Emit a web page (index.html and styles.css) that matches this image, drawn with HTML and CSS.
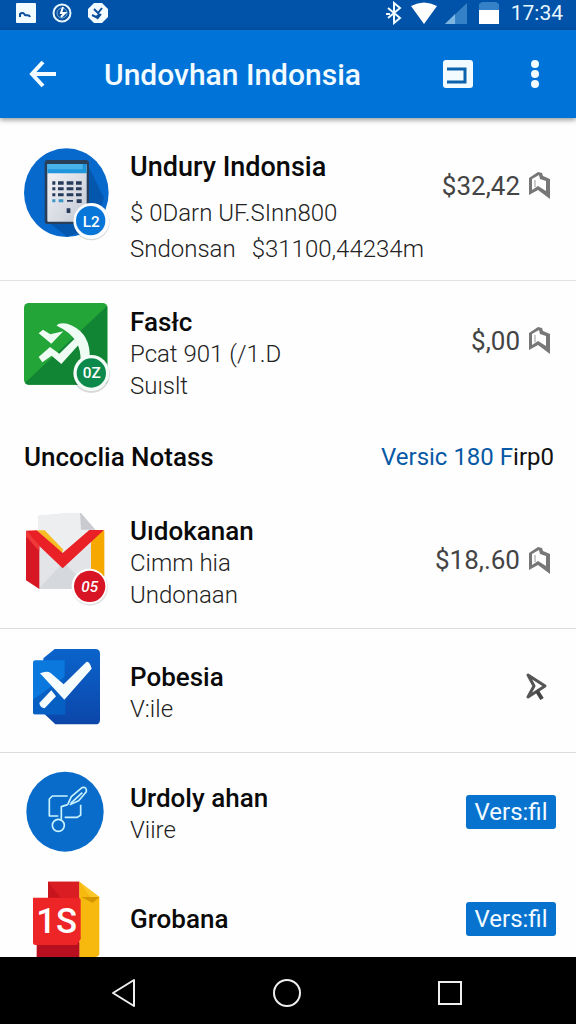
FILE: index.html
```html
<!DOCTYPE html>
<html lang="id">
<head>
    <meta charset="UTF-8">
    <meta name="viewport" content="width=device-width, initial-scale=1.0">
    <title>Undovhan Indonsia</title>
    <link rel="stylesheet" href="styles.css">
</head>
<body>

<!-- shared icon shapes -->
<svg class="defs" aria-hidden="true">
    <symbol id="bookmark" viewBox="0 0 26 30">
        <path d="M2 8 L11 2 L15 3 L16 6 L23 9 V29 L11 20 L2 25 Z M5 9 V20 L11 16 L19 21 V11 L13 9 L12 5 Z" fill="#777" fill-rule="evenodd"/>
        <path d="M8 10 V17" stroke="#999" stroke-width="1"/>
    </symbol>
</svg>

<div class="status-bar">
    <div class="status-left">
        <svg width="20" height="20" viewBox="0 0 20 20">
            <rect width="20" height="20" rx="1" fill="#f2fbff"/>
            <path d="M4 14 V11 C6 9 8 10 9 12 C11 13 13 11 14 14" fill="none" stroke="#0b4f9c" stroke-width="2"/>
        </svg>
        <svg width="20" height="20" viewBox="0 0 20 20">
            <circle cx="10" cy="10" r="8.5" fill="#0b4f9c" stroke="#e6f7ff" stroke-width="2"/>
            <circle cx="10" cy="10" r="5" fill="none" stroke="#6eaee0" stroke-width="1"/>
            <path d="M11 4 L9 10 H13 L9 14" fill="none" stroke="#fff" stroke-width="2"/>
        </svg>
        <svg width="20" height="20" viewBox="0 0 20 20">
            <path d="M6 0 H14 L20 6 V14 L14 20 H6 L0 14 V6 Z" fill="#f2fbff"/>
            <path d="M6 6 L10 10 L14 5 M4 12 L8 14 L12 11 M9 16 L13 11" fill="none" stroke="#0b4f9c" stroke-width="2"/>
        </svg>
    </div>
    <div class="status-right">
        <svg width="18" height="24" viewBox="0 0 18 24">
            <path d="M3 7 L15 17 L9 22 V2 L15 7 L3 17" fill="none" stroke="#f2fbff" stroke-width="2"/>
            <path d="M1 13 H5" stroke="#f2fbff" stroke-width="2"/>
        </svg>
        <svg width="26" height="22" viewBox="0 0 26 22"><path d="M0 4 Q13 -3 26 4 L13 22 Z" fill="#fff"/></svg>
        <svg width="22" height="24" viewBox="0 0 24 24">
            <path d="M0 24 L24 1 V24 Z" fill="#3581c8"/>
            <path d="M0 24 L11 13 V24 Z" fill="#7db5e2"/>
        </svg>
        <svg class="battery" width="20" height="22" viewBox="0 0 20 22">
            <path d="M0 2 L3 0 H17 L20 2 V9 H0 Z" fill="#3581c8"/>
            <path d="M0 8 H20 V22 H0 Z" fill="#fff"/>
        </svg>
        <span class="clock">17:34</span>
    </div>
</div>

<header class="app-bar">
    <button class="icon-btn" aria-label="Back">
        <svg width="30" height="30" viewBox="0 0 30 30">
            <path d="M28 15 H4 M15 3 L4 15 L15 27" fill="none" stroke="#f2fbff" stroke-width="4"/>
        </svg>
    </button>
    <h1>Undovhan Indonsia</h1>
    <button class="icon-btn card-btn" aria-label="Card view">
        <svg width="30" height="28" viewBox="0 0 30 28">
            <rect width="30" height="28" rx="3" fill="#f2fbff"/>
            <path d="M4 9 H22 V22 H4" fill="none" stroke="#0b62ad" stroke-width="3"/>
        </svg>
    </button>
    <button class="icon-btn" aria-label="More options">
        <svg width="10" height="28" viewBox="0 0 10 28" fill="#f2fbff">
            <circle cx="5" cy="4" r="4"/><circle cx="5" cy="14" r="4"/><circle cx="5" cy="24" r="4"/>
        </svg>
    </button>
</header>

<main class="list">
    <div class="row row-top row-first">
        <svg class="app-icon" viewBox="0 0 264 282">
            <defs>
                <linearGradient id="paper" x1="0" y1="0" x2="1" y2="1">
                    <stop offset="0" stop-color="#f4f5f8"/><stop offset="1" stop-color="#c4c9d4"/>
                </linearGradient>
            </defs>
            <ellipse cx="127" cy="134" rx="127" ry="133" fill="#0869cc"/>
            <path d="M64 216 L196 60 L240 150 L206 240 L130 266 Z" fill="#0557ad"/>
            <rect x="62" y="36" width="133" height="192" rx="10" fill="#293e59"/>
            <rect x="70" y="48" width="118" height="173" rx="3" fill="url(#paper)"/>
            <path d="M70 48 H188 V76 H70 Z" fill="#2095dc"/>
            <path d="M70 48 H176 V64 H70 Z" fill="#48b2ea"/>
            <g fill="#273b5b">
                <path d="M85 100h9v10h-9zM102 100h17v10h-17zM128 100h20v10h-20zM156 100h17v10h-17z"/>
                <path d="M85 118h9v9h-9zM102 118h17v9h-17zM128 118h20v9h-20zM156 118h17v9h-17z"/>
                <path d="M85 136h9v9h-9zM102 136h17v9h-17zM128 136h20v9h-20zM156 136h17v9h-17z"/>
                <path d="M158 154h15v11h-15zM129 156h18v5h-18zM128 181h11v14h-11z"/>
            </g>
            <path d="M85 154h9v9h-9zM104 154h14v9h-14z" fill="#3996c8"/>
            <circle cx="202" cy="222" r="55" fill="#000" opacity=".15"/>
            <circle cx="202" cy="219" r="54" fill="#fafcff"/>
            <circle cx="200" cy="218" r="44" fill="#0875d8"/>
            <text x="202" y="236" class="badge-text">L2</text>
        </svg>
        <div class="info">
            <h2>Undury Indonsia</h2>
            <p>$ 0Darn UF.SInn800</p>
            <p class="split"><span>Sndonsan</span><span>$31100,44234m</span></p>
        </div>
        <div class="price">$32,42</div>
        <button class="icon-btn mark" aria-label="Bookmark Undury Indonsia"><svg width="26" height="30"><use href="#bookmark"/></svg></button>
    </div>

    <div class="row row-top">
        <svg class="app-icon" viewBox="0 0 264 282">
            <rect width="250" height="245" rx="14" fill="#24a538"/>
            <path d="M250 8 V231 Q250 245 236 245 H14 Q6 245 3 239 Z" fill="#128535"/>
            <path d="M44 91 L57 80 L79 94 L118 85 L82 122 Z" fill="#eefcf4"/>
            <path d="M44 162 L78 132 L106 152 L151 108 L164 125 L112 183 L83 158 L55 178 Z" fill="#eefcf4"/>
            <path d="M98 68 Q105 58 130 62 Q193 83 197 150 V180 H169 Q177 104 98 68 Z" fill="#eefcf4"/>
            <circle cx="202" cy="214" r="56" fill="#000" opacity=".15"/>
            <circle cx="202" cy="210" r="54" fill="#f3fbf7"/>
            <circle cx="202" cy="210" r="44" fill="#0c8a4c"/>
            <text x="203" y="226" class="badge-text">0Z</text>
        </svg>
        <div class="info">
            <h2>Fasłc</h2>
            <p>Pcat 901 (/1.D</p>
            <p>Suıslt</p>
        </div>
        <div class="price">$,00</div>
        <button class="icon-btn mark" aria-label="Bookmark Fasłc"><svg width="26" height="30"><use href="#bookmark"/></svg></button>
    </div>

    <div class="section-head">
        <h2>Uncoclia Notass</h2>
        <a href="#">Versic 180 F<span>irp0</span></a>
    </div>

    <div class="row row-mail">
        <svg class="app-icon" viewBox="0 0 264 282">
            <path d="M43 8 L168 -3 L214 50 V226 L44 228 Z" fill="#e2e4e7"/>
            <path d="M43 8 L168 -3 L214 50 V80 L120 160 L43 80 Z" fill="#eceef0"/>
            <path d="M168 -3 L214 50 H171 Z" fill="#c9cbd0"/>
            <path d="M44 228 L118 148 L200 228 Z" fill="#d5d8dd"/>
            <path d="M201 70 L241 52 V190 H201 Z" fill="#f6a800"/>
            <path d="M38 52 L62 52 L118 110 L112 124 Z" fill="#f6bd24"/>
            <path d="M6 53 L46 98 V228 L6 202 Z" fill="#d81725"/>
            <path d="M6 53 L38 52 L116 120 L196 51 H240 L116 166 L45 98 Z" fill="#e92127"/>
            <path d="M6 53 L46 98 V115 L6 70 Z" fill="#ef3838"/>
            <circle cx="198" cy="224" r="54" fill="#000" opacity=".1"/>
            <circle cx="196" cy="220" r="53" fill="#fff"/>
            <circle cx="197" cy="220" r="47" fill="#d71524"/>
            <text x="197" y="236" class="badge-text badge-slant">05</text>
        </svg>
        <div class="info">
            <h2>Uıdokanan</h2>
            <p>Cimm hia</p>
            <p>Undonaan</p>
        </div>
        <div class="price">$18,.60</div>
        <button class="icon-btn mark" aria-label="Bookmark Uıdokanan"><svg width="26" height="30"><use href="#bookmark"/></svg></button>
    </div>

    <div class="row row-line">
        <svg class="app-icon icon-small" viewBox="0 0 264 240">
            <defs>
                <linearGradient id="deep" x1="0" y1="0" x2="0" y2="1">
                    <stop offset="0" stop-color="#0a64cb"/><stop offset="1" stop-color="#0c46aa"/>
                </linearGradient>
            </defs>
            <path d="M58 34 L92 6 H214 Q228 6 228 20 V218 Q228 232 214 232 H94 L58 198 Z" fill="url(#deep)"/>
            <path d="M34 40 H122 V202 H34 Q27 202 27 194 V48 Q27 40 34 40 Z" fill="#0a78dc"/>
            <path d="M124 88 V202 H34 Q27 202 27 194 V158 Z" fill="#0660c4"/>
            <path d="M48 79 Q68 70 80 78 L119 112 L187 45 Q196 41 203 65 L121 158 Z" fill="#f6fdff"/>
            <path d="M46 168 L82 130 L96 148 L62 184 Q48 183 46 168 Z" fill="#f6fdff"/>
        </svg>
        <div class="info">
            <h2>Pobesia</h2>
            <p>V:ile</p>
        </div>
        <button class="icon-btn send" aria-label="Send Pobesia">
            <svg width="24" height="30" viewBox="0 0 24 30">
                <path d="M4 3 L21 14 L4 25 L10 14 Z" fill="#fff" stroke="#555" stroke-width="3" stroke-linejoin="round"/>
                <path d="M13 19 L18 27" stroke="#444" stroke-width="4"/>
            </svg>
        </button>
    </div>

    <div class="row row-share">
        <svg class="app-icon icon-medium" viewBox="0 0 264 246">
            <ellipse cx="123" cy="122" rx="116" ry="120" fill="#0a6cca"/>
            <g fill="none" stroke="#c9f2ff" stroke-width="5" stroke-linejoin="round">
                <path d="M131 75 H85 L76 84 V135 H103 M122 139 H160 L170 132 V101"/>
                <path d="M131 101 L142 77 L174 50 Q189 46 187 62 L164 89 L137 101"/>
                <path d="M140 97 L175 65 M131 101 L112 107 V146"/>
                <circle cx="103" cy="163" r="18"/>
            </g>
        </svg>
        <div class="info">
            <h2>Urdoly ahan</h2>
            <p>Viire</p>
        </div>
        <button class="action">Vers:fil</button>
    </div>

    <div class="row">
        <svg class="app-icon icon-small" viewBox="0 0 264 240">
            <path d="M72 8 H166 V240 H72 Z" fill="#c8141d"/>
            <path d="M72 8 H166 V56 H110 Z" fill="#da1c23"/>
            <path d="M166 8 L226 54 V222 Q226 234 214 234 H166 Z" fill="#f7b90e"/>
            <path d="M166 8 L226 54 L204 60 Z" fill="#fcc728"/>
            <path d="M172 54 H226 L206 72 Z" fill="#d59500"/>
            <path d="M38 190 H166 V240 H38 Z" fill="#b80f20"/>
            <path d="M27 56 H166 L170 62 V180 L158 198 H34 Q27 198 27 190 Z" fill="#ed2526"/>
            <text x="98" y="162" class="tile-text">1S</text>
        </svg>
        <div class="info">
            <h2>Grobana</h2>
        </div>
        <button class="action">Vers:fil</button>
    </div>
</main>

<nav class="nav-bar">
    <button class="icon-btn" aria-label="Back">
        <svg width="28" height="30" viewBox="0 0 28 30"><path d="M24 2 V28 L3 15 Z" fill="none" stroke="#eee" stroke-width="2" stroke-linejoin="round"/></svg>
    </button>
    <button class="icon-btn" aria-label="Home">
        <svg width="30" height="30" viewBox="0 0 30 30"><circle cx="15" cy="15" r="13" fill="none" stroke="#eee" stroke-width="2"/></svg>
    </button>
    <button class="icon-btn" aria-label="Recent apps">
        <svg width="28" height="30" viewBox="0 0 28 30"><rect x="3" y="4" width="22" height="22" fill="none" stroke="#eee" stroke-width="2"/></svg>
    </button>
</nav>

</body>
</html>
```
FILE: styles.css
```css
* {
    box-sizing: border-box;
}
body {
    margin: 0;
    height: 100vh;
    display: flex;
    flex-direction: column;
    overflow: hidden;
    font-family: Roboto, "Liberation Sans", sans-serif;
    background-color: #fefefe;
    color: #0a0a0a;
}
h1, h2, p {
    margin: 0;
}
svg {
    display: block;
    flex-shrink: 0;
}
.defs {
    position: absolute;
    width: 0;
    height: 0;
}
.icon-btn {
    display: flex;
    align-items: center;
    justify-content: center;
    padding: 0;
    border: none;
    background: none;
    cursor: pointer;
}

/* top bars */
.status-bar {
    display: flex;
    justify-content: space-between;
    flex-shrink: 0;
    height: 30px;
    padding: 0 13px 4px 16px;
    background-color: #0053a8;
    color: #e6f7ff;
}
.status-left, .status-right {
    display: flex;
    align-items: center;
}
.status-left {
    gap: 16px;
}
.status-right {
    gap: 8px;
}
.battery {
    margin: 0 4px;
}
.clock {
    font-size: 21px;
    line-height: 26px;
}
.app-bar {
    display: flex;
    align-items: center;
    flex-shrink: 0;
    height: 88px;
    padding: 0 36px 0 28px;
    background-color: #0073d8;
    box-shadow: 0 2px 5px rgba(0, 0, 0, 0.4);
    z-index: 1;
}
.app-bar h1 {
    flex: 1;
    margin-left: 46px;
    font-size: 30px;
    font-weight: 500;
    color: #f2fbff;
}
.card-btn {
    margin-right: 57px;
}

/* list */
.list {
    flex: 1;
    min-height: 0;
    overflow: hidden;
}
.row {
    display: flex;
    align-items: center;
    padding: 0 20px 0 24px;
}
.row-top {
    align-items: flex-start;
    padding-top: 22px;
}
.row-first {
    padding-top: 30px;
    padding-bottom: 13px;
    border-bottom: 1px solid #e2e2e2;
}
.row-mail, .row-line {
    border-bottom: 1px solid #dcdcdc;
}
.row-mail {
    padding-top: 36px;
    padding-bottom: 17px;
}
.row-line {
    padding-top: 18px;
    padding-bottom: 25px;
}
.row-share {
    padding-top: 18px;
    padding-bottom: 26px;
}
.app-icon {
    width: 88px;
    height: 94px;
    margin-right: 18px;
}
.icon-small {
    height: 80px;
}
.icon-medium {
    height: 82px;
}
.info {
    flex: 1;
    min-width: 0;
    white-space: nowrap;
}
.row-top .info {
    padding-top: 3px;
}
.row-mail .info {
    padding-top: 6px;
}
.row-line .info {
    padding-top: 12px;
}
.row-share .info {
    padding-top: 4px;
}
h2 {
    font-size: 26px;
    line-height: 32px;
    font-weight: 500;
}
.info p {
    font-size: 24px;
    line-height: 32px;
    font-weight: 300;
    color: #222;
}
.row-first h2 {
    margin-bottom: 12px;
    font-size: 27px;
}
.row-first p {
    line-height: 36px;
}
.split {
    display: flex;
    gap: 16px;
}
.price {
    font-size: 26px;
    line-height: 32px;
    color: #444;
}
.mark {
    margin-left: 7px;
    margin-right: 3px;
}
.row-top .price, .row-top .mark {
    margin-top: 22px;
}
.send {
    margin-right: 8px;
}
.action {
    width: 90px;
    height: 34px;
    padding: 0;
    border: none;
    border-radius: 3px;
    background-color: #0873cf;
    color: #f2fbff;
    font-family: inherit;
    font-size: 24px;
    line-height: 34px;
    cursor: pointer;
}
.section-head {
    display: flex;
    justify-content: space-between;
    align-items: center;
    padding: 39px 22px 0 24px;
}
.section-head a {
    font-size: 24px;
    line-height: 32px;
    color: #0759a5;
    text-decoration: none;
}
.section-head a span {
    color: #111;
}

/* lettering inside the icons */
.badge-text {
    fill: #fff;
    font-size: 46px;
    font-weight: 500;
    text-anchor: middle;
}
.badge-slant {
    font-style: italic;
}
.tile-text {
    fill: #fff;
    font-size: 104px;
    font-weight: 500;
    text-anchor: middle;
}

.nav-bar {
    display: flex;
    justify-content: space-between;
    align-items: center;
    flex-shrink: 0;
    height: 67px;
    padding: 5px 112px 0 110px;
    background-color: #000;
}
```
